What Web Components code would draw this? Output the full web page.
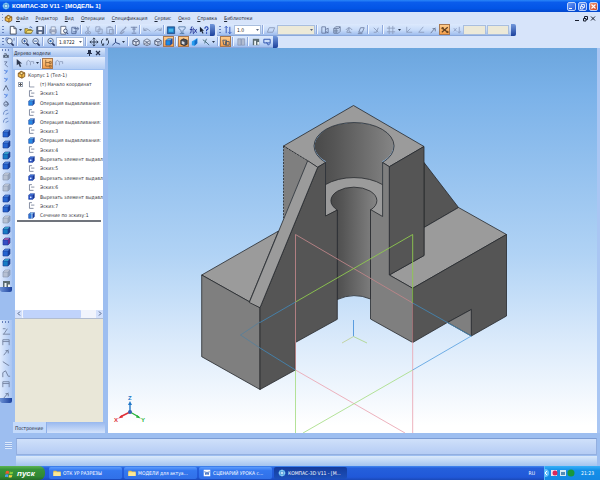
<!DOCTYPE html>
<html lang="ru">
<head>
<meta charset="utf-8">
<title>КОМПАС-3D V11 - [МОДЕЛЬ 1]</title>
<style>
html,body{margin:0;height:100%}
body{font:5px/8px "DejaVu Sans Condensed","DejaVu Sans",sans-serif;color:#1c2434;overflow:hidden}
</style>
</head>
<body>
<cad-app></cad-app>
<script>
const cube=(a,b,c,x='')=>`<path fill="${a}" d="M2 4 4 2h5L7 4z"/><path fill="${b}" d="M2 4h5v5H2z"/><path fill="${c}" d="M7 4l2-2v5L7 9z"/><path d="M2 4 4 2h5v5L7 9H2zM2 4h5l2-2M7 4v5" stroke="#173a94" stroke-width=".6" fill="none"/>${x}`;
const wire=(s,x='')=>`<path d="M2 4l3.500-2L9 4v4L5.500 9.500 2 8zM2 4l3.500 1.500L9 4M5.500 5.500v4" fill="#e4ecfa" stroke="${s}" stroke-width=".9"/>${x}`;
const lens=(x='')=>`<circle cx="5" cy="4.500" r="3" fill="#e8f2fc" stroke="#3c4c70" stroke-width=".9"/><path d="M7 7l2.500 2.500" stroke="#28345c" stroke-width="1.600"/>${x}`;
const st=(d,c='#42506e',w=1)=>`<path d="${d}" fill="none" stroke="${c}" stroke-width="${w}"/>`;
const G='#8b9aba';
const ICONS={
 app:`<circle cx="5.500" cy="5.500" r="4.500" fill="#5fb4ec"/><path d="M5.500 1v9M1 5.500h9" stroke="#d8f0ff"/><circle cx="5.500" cy="5.500" r="2.200" fill="#c4e6fc" stroke="#2c74c4" stroke-width=".7"/>`,
 part:`<path d="M1.500 4 5 1.500l4.500 2v4.500L6 10 1.500 8z" fill="#f2bd4c" stroke="#6c4210" stroke-width=".9"/><path d="M1.500 4 6 5.500 9.500 3.500M6 5.500V10" fill="none" stroke="#6c4210" stroke-width=".8"/><circle cx="5.500" cy="4" r="1.500" fill="#fff0b0" stroke="#6c4210" stroke-width=".6"/>`,
 new:`<path d="M2.500 1.500h4L9 4v6H2.500z" fill="#fff" stroke="#30384c" stroke-width=".9"/><path d="M6.500 1.500V4H9" fill="none" stroke="#30384c" stroke-width=".8"/>`,
 open:`<path d="M1 9V4h3l1 1h3v4z" fill="#e8c440" stroke="#5a5420" stroke-width=".7"/><path d="M2 9l1.500-3H10L8 9z" fill="#f8e078" stroke="#5a5420" stroke-width=".6"/><path d="M6 2.500q2-1.500 3 1" stroke="#2c50a0" stroke-width=".8" fill="none"/>`,
 save:`<path d="M2 2h7.500v7.500H2z" fill="#5c6c8c" stroke="#28344c" stroke-width=".8"/><path d="M3.500 2h4.500v3.500H3.500zM4 7.500h3.500v2H4z" fill="#f4f8ff"/>`,
 print:`<path d="M2 5h7v3.500H2z" fill="#a4aec4" stroke="#7482a0" stroke-width=".7"/><path d="M3.500 5V2H8v3M3.500 7.500H8V10H3.500z" fill="#e8eef8" stroke="#7482a0" stroke-width=".7"/>`,
 preview:`<path d="M2 1.500h5.500V10H2z" fill="#fff" stroke="#44506c" stroke-width=".8"/><circle cx="7" cy="6.500" r="2" fill="#dcecfc" stroke="#28365c" stroke-width=".8"/><path d="M8.500 8l1.500 2" stroke="#28365c"/>`,
 docs:st('M2 2.500h4.500v7H2zM4 4h5M8 2l1.500 2L8 6M3.500 7.500h4','#4c6290',.9),
 cut:st('M4 1.500 6.500 7M7 1.500 4.500 7',G,.8)+`<circle cx="4" cy="8.500" r="1.300" fill="none" stroke="${G}"/><circle cx="7" cy="8.500" r="1.300" fill="none" stroke="${G}"/>`,
 copy:st('M2 2h4.500v5H2zM4.500 4.500H9v5H4.500z',G,.9),
 paste:st('M2 2.500h6V9.500H2zM3.500 2h3M5 5h4.500v5H5z',G,.9),
 brush:st('M9 2 5.500 6M5.500 5 2.500 9l1.500.500L7 7',G,1.300),
 props:st('M2 2.500h7M3.500 4.500h4M5.500 2v6M3 9h5','#6f80a8',1),
 undo:st('M2 6q3-4 7 1M2 3v3h3',G,1),
 redo:st('M9 6q-3-4-7 1M9 3v3H6',G,1),
 vars:`<path d="M1.500 2h8v7.500h-8z" fill="#1e78c4" stroke="#174078" stroke-width=".8"/><path d="M3 4h5v3.500H3z" fill="#48b8e8"/>`,
 filt:st('M2 2h7v2L6.500 6v3.500L4.500 8V6L2 4z','#5478a4',.9)+st('M3 9.500h5','#5478a4'),
 fx:`<path d="M5 2Q3.500 1.500 3.500 3.500v3Q3.500 9.500 2 9M2 5h3M7 4.500l2.500 4M9.500 4.500 7 8.500M6 3q-1 3 0 7" fill="none" stroke="#14248c" stroke-width=".9"/>`,
 help:`<path d="M1 2v6l1.500-1.200L4 9.500l1-.5L3.700 6.300h1.800z" fill="#182030"/><path d="M6.500 4q0-2 1.700-2T10 3.800Q10 5 8.300 5.500V7M8.300 8v1.500" fill="none" stroke="#1c3cac" stroke-width="1.200"/>`,
 steps:st('M3.500 1.500V9M7.500 2v7.500M2 3l1.500-1.500L5 3M6 8l1.500 1.500L9 8','#2a50bc',1),
 plane:st('M1.500 8 3.500 3h6L7.500 8z',G,1),
 lcs:st('M2 2h4v7H2zM6 5l3-1.500v5H6M7 7l2 2','#64769c',.9),
 grid2:st('M2 4l2-2h5v5L7 9H2zM2 6.500h5M4.500 4v5M2 4h5l2-2','#5f6f90',.9),
 rot:st('M2 5.500q3.500-5 7 0M5.500 3v4L8 8.500 3 8z',G,1),
 sk:st('M3 8 5 3h4L7 8zM2 9.500h5','#7383a6',1),
 pt:st('M3 3l5 5M8 3 6 8H3',G,1),
 grid:st('M1 3.500h9M1 7.500h9M3.500 1v9M7.500 1v9',G,.9),
 ax:st('M3 2v6h6M3 8 7 4',G,.9),
 ang:st('M8 2 3 8h6',G,.9),
 snap:`<path d="M2 8 8.500 2.500M2 3l7 5.500" stroke="#5a3c20" stroke-width="1.200"/><circle cx="3" cy="3.500" r="1.300" fill="#724a22"/><circle cx="8" cy="7.500" r="1.300" fill="#724a22"/>`,
 xy:st('M2 3.500 5 7M5 3.500 2 7M8 2v6M6.500 7l1.500 2L9.500 7','#8a9cc0',.9),
 zin:lens(st('M3.500 4.500h3M5 3v3','#2850a0')),
 zout:lens(st('M3.500 4.500h3','#2850a0')),
 zwin:lens(st('M1 1h3M1 1v3M10 1v3','#3c64b0',.8)),
 zsel:lens(`<circle cx="5" cy="4.500" r="1.300" fill="#3470c0"/>`),
 move:st('M5.500 1v9M1 5.500h9M4 2.500 5.500 1 7 2.500M4 8.500l1.500 1.500L7 8.500M2.500 4 1 5.500 2.500 7M8.500 4 10 5.500 8.500 7','#28364c',1),
 spin:st('M3.500 2q-4 3.500 0 7M7.500 2q4 3.500 0 7M2 9h2V7M9 2H7v2','#28364c',1),
 axes:st('M5 1.500V6L1.500 9M5 6l5 2','#344c84',1.100),
 w1:wire('#3c4660'),w2:wire('#69748c',st('M2 8l3-2 4 2','#3c4660',.7)),w3:wire('#3c4660',`<path d="M6 6l3-2v4L6 9z" fill="#a8b4cc"/>`),
 shade:cube('#63c6f4','#1c8ce4','#1458b4'),shade2:`<path d="M2 3.500 5 2l4 1.500V8L6 9.500 2 8z" fill="#484c54" stroke="#20242c" stroke-width=".8"/><path d="M3 4.500 6 5.500v3L3 7.500z" fill="#d8dce4"/>`,
 persp:`<path d="M2 5 8 1.500V7L5 9.500 2 9z" fill="#279df0"/><path d="M5 5l3-3.500V7L5 9.500z" fill="#1669c4"/>`,
 sec:st('M2 3l4 3M5 5l4 4M6 2l-2 5','#456c7c',1),
 orng:st('M2 3.500h4v5H3zM5 5h4v4H5z','#4c5a6c',1),
 dim:`<path d="M2 2h3.500v7H2zM6 2h3.500v7H6z" fill="#b0bbd0" stroke="#8290b0" stroke-width=".7"/>`,
 spec:`<path d="M2 2h7v7H2z" fill="#5b6b70"/><path d="M3.500 4h2v5h-2zM7 5.500h2v3H7z" fill="#eef4f4"/>`,
 refr:st('M2 2.500h7v4H2zM5 6l2 3 2-2','#2850ac',1),
 sk3:st('M3 2v7h5M3 2h3M5 5h4','#5d6984',.9),
 org:st('M3 1.500v7h6','#5d6984',.8),
 ext:cube('#5ab4f4','#238ae6','#1450b0'),cutx:cube('#4278e0','#1c48c8','#143498',`<path d="M3.500 5.500h2v2h-2z" fill="#d8ecff"/>`),
 sect:cube('#58b0f0','#2a78dc','#173ca0',st('M6 2v8','#f0f8ff',.8)),
 ptr:`<path d="M3 1v7l2-1.500L6.500 10l1.500-.7L6.500 6H9z" fill="#303a50"/>`,
 tree:st('M3 2v7h4M3 5h4M7 4h2v2H7zM7 8h2v2H7z','#8a6030',.9),
 rel:st('M2 8V4l2-1.500L6 5v3M6 4h3.500v2.500',G,.9),
 sd1:cube('#43c4dc','#167cc4','#174490'),sd2:cube('#5690e8','#2564d0','#143c98'),
 sg:cube('#ccd3e0','#b6c0d2','#98a5bc').replace('#173a94','#8492ac'),spu:cube('#cc68b4','#384cc4','#802890'),
 dot:`<path d="M3 3l4 2-3 3" fill="none" stroke="#4a78d8" stroke-width="1.300"/><circle cx="7" cy="3.500" r="1.200" fill="#73a8f4"/>`,
 arc:st('M2 9q0-6 6-6M5 9l4-2','#5072b8',1),
 zee:st('M3 2.500h4L4 6l4 3.500','#56668c',1),
 tri:st('M2 9 5.500 2 9 9','#44536e',1.100),
 gear:`<circle cx="5.500" cy="5.500" r="3" fill="none" stroke="#4b5a78" stroke-width="1.100"/><path d="M5 1l4 5H4" fill="none" stroke="#4b5a78" stroke-width=".8"/>`,
 meas:`<path d="M1.500 4h8v4h-8z" fill="#65738c"/><path d="M3 2.500h3V4M4 5v2M7 5v2" stroke="#2e3a50" fill="none"/><circle cx="5.500" cy="6" r="1" fill="#dff"/>`,
 win:`<path d="M1 3Q3 1.500 5 3l-.5 3Q2.500 5 .5 6z" fill="#f05a30"/><path d="M5.800 3.200Q8 4.500 10 3l-.7 3Q7.500 7 5.300 6z" fill="#85cc3c"/><path d="M.300 7Q2.500 6 4.200 7l-.7 3Q2 9-.2 10z" fill="#4a9cf4"/><path d="M5 7.200q2 1 4 0L8.200 10q-2 1-3.900 0z" fill="#f8d440"/>`,
 fold:`<path d="M.500 2.500h4l1 1h5v6H.500z" fill="#eec850"/><path d="M.500 4.500h10v5H.500z" fill="#fbe898"/>`,
 word:`<path d="M1 1h9v9H1z" fill="#fff"/><path d="M2.500 3l1.500 5 1.500-4L7 8l1.500-5" fill="none" stroke="#245ab8" stroke-width="1.100"/>`,
 d1:st('M2 9h8M3 9l4-6M2 3h3','#6c7a98',.9),d2:st('M2 9V3h7v6M2 5h7','#6c7a98',.9),d3:st('M3 9l5-6M5 4h3v3','#6c7a98',1),d4:st('M2 4l6 4M8 8H9','#6c7a98',1),d5:st('M2 9V4l3-2 3 6h2','#6c7a98',1)
};
const svg=(n,s=11)=>`<svg viewBox="0 0 11 11" width="${s}" height="${s}" aria-hidden="true">${ICONS[n]||''}</svg>`;

/* Shared base: clones a template into an open shadow root. */
class Part extends HTMLElement{
 connectedCallback(){
  if(this.shadowRoot)return;
  const t=document.createElement('template');
  t.innerHTML=`<style>*{box-sizing:border-box}svg{display:block}button{font:inherit;color:inherit;padding:0;border:0;background:none}${this.css()}</style>${this.html()}`;
  this.attachShadow({mode:'open'}).append(t.content.cloneNode(true));
 }
 css(){return''} html(){return''}
}
const def=(n,css,html)=>customElements.define(n,class extends Part{css(){return css}html(){return typeof html==='function'?html(this):html}});

def('tool-icon',`:host{display:block;flex:none;width:11px;height:11px}
:host([size="8"]){width:10px;height:8px}
button{display:grid;place-items:center;width:100%;height:100%}
:host([on]) button{background:linear-gradient(#ffd092,#f49a44);outline:1px solid #a87850;outline-offset:-1px}`,
 e=>`<button aria-label="${e.getAttribute('label')||e.getAttribute('name')}">${svg(e.getAttribute('name'),+(e.getAttribute('draw')||10))}</button>`);

def('tool-sep',`:host{display:block;flex:none;width:2px;height:9px;border-left:1px solid #8fa9dc;border-right:1px solid #f0f6ff}`,'');
def('tool-more',`:host{display:block;flex:none;width:5px;height:9px}button{display:grid;place-items:center;width:100%;height:100%}`,
 `<button aria-label="Ещё"><svg width="3" height="2" viewBox="0 0 3 2"><path d="M0 0h3L1.500 2z" fill="#29374f"/></svg></button>`);
def('tool-group',`:host{display:flex;flex:none;align-items:center;height:12px;background:linear-gradient(#dce9fd,#c7dbf9 55%,#9fbdee);border-bottom:1px solid #8aa8dc;border-radius:0 2px 2px 0}
.grip{width:2px;height:8px;margin:0 var(--grip-gap,3px) 0 2px;background:repeating-linear-gradient(#6580bc 0 1px,transparent 1px 3px);flex:none}
.cap{width:5px;height:12px;margin-left:1px;border-radius:0 2px 2px 0;background:linear-gradient(#7298dc,#1c419c);flex:none}`,
 `<i class="grip"></i><slot></slot><i class="cap"></i>`);
def('tool-combo',`:host{display:block;flex:none;width:27px;height:10px;position:relative}
select{appearance:none;display:block;width:100%;height:100%;margin:0;border:1px solid #a9bede;background:#fff;font:inherit;line-height:8px;padding:0 2px;color:#222;border-radius:0;opacity:1}
select:disabled{background:#ece9d8}
svg{position:absolute;right:2px;top:4px}`,
 e=>`<select aria-label="${e.getAttribute('label')}" ${e.hasAttribute('off')?'disabled':''}><option>${e.getAttribute('value')||''}</option></select>${e.hasAttribute('plain')?'':'<svg width="3" height="2" viewBox="0 0 3 2"><path d="M0 0h3L1.500 2z" fill="#56647e"/></svg>'}`);

def('title-bar',`:host{display:flex;align-items:center;gap:2px;padding:0 2px 0 2px;background:linear-gradient(#2a86f8,#0a5cec 20%,#0355e6 70%,#0347cc);color:#fff;font:bold 6px/12px "Liberation Sans",sans-serif}
span{flex:1;white-space:nowrap}
button{width:9px;height:9px;border:1px solid #bcd2fa;border-radius:2px;background:linear-gradient(135deg,#6a9cf8,#2058dc);display:grid;place-items:center}
.x{background:linear-gradient(135deg,#f29a78,#d0401c)}`,
 ()=>`${svg('app',8)}<span>КОМПАС-3D V11 - [МОДЕЛЬ 1]</span>
<button aria-label="Свернуть"><svg width="7" height="7">${st('M1 5.500h3','#fff',1)}</svg></button>
<button aria-label="Восстановить"><svg width="7" height="7">${st('M2.500 3V1.500h3v3H4M1.500 3.500H4V6H1.500z','#fff',.8)}</svg></button>
<button class="x" aria-label="Закрыть"><svg width="7" height="7">${st('M1.500 1.500l4 4M5.500 1.500l-4 4','#fff',1.100)}</svg></button>`);

def('menu-bar',`:host{display:flex;align-items:center;background:#d7e4fa;padding:0 3px 0 2px}
.grip{width:1px;height:8px;margin-right:1px;background:repeating-linear-gradient(#7c94c8 0 1px,transparent 1px 3px)}
nav{display:flex;gap:7px;flex:1;margin-left:3px}
nav button{white-space:nowrap;line-height:10px}
nav button::first-letter{text-decoration:underline}
.mdi{display:flex;gap:1px}`,
 ()=>`<i class="grip"></i>${svg('part',9)}<nav>${['Файл','Редактор','Вид','Операции','Спецификация','Сервис','Окно','Справка','Библиотеки'].map(x=>`<button>${x}</button>`).join('')}</nav>
<div class="mdi">${[['Свернуть окно','M1 5.500h4'],['Восстановить окно','M2.500 3V1.500h3v3H4M1.500 3.500H4V6H1.500z'],['Закрыть окно','M1 1.500l4 4M5 1.500l-4 4']].map(([l,d])=>`<button aria-label="${l}"><svg width="7" height="7">${st(d,'#161c2c',1)}</svg></button>`).join('')}</div>`);

const ic=s=>s.split(' ').map(n=>n==='|'?'<tool-sep></tool-sep>':n==='v'?'<tool-more></tool-more>':`<tool-icon name="${n.replace('*','')}"${n.endsWith('*')?' on':''}></tool-icon>`).join('');
def('main-tools',`:host{display:flex;gap:2px;background:#d7e4fa}.snaps{--grip-gap:0px;gap:1px}`,
 ()=>`<tool-group>${ic('new v open save | print preview docs | cut copy paste | brush props | undo redo | vars filt fx help')}</tool-group>
<tool-group class="snaps">${ic('steps')}<tool-combo label="Шаг" value="1.0"></tool-combo>${ic('| plane')}<tool-combo off label="Слой" style="width:38px"></tool-combo>${ic('| lcs grid2 rot sk | pt | grid v ax ang d3 snap* xy')}<tool-combo off plain label="X" style="width:23px"></tool-combo><tool-combo off plain label="Y" style="width:22px"></tool-combo></tool-group>`);
def('view-tools',`:host{display:flex;background:#d7e4fa;--grip-gap:0px}tool-combo{width:28px}tool-sep{margin:0 1px}`,
 ()=>`<tool-group>${ic('zwin | zin zout | zsel')}<tool-combo label="Масштаб" value="1.8722"></tool-combo>${ic('| move spin axes v | w1 w2 w3 shade* | shade2* persp sec v | orng* | dim | spec refr')}</tool-group>`);

def('side-tools',`:host{display:flex;flex-direction:column;gap:28px;background:#9dbef0;padding-bottom:28px}
section{display:flex;flex-direction:column;align-items:center;width:12px;background:linear-gradient(90deg,#e0ebfd,#a9c5f2);border-radius:0 0 2px 2px}
.grip{width:8px;height:2px;margin:1px 0;background:repeating-linear-gradient(90deg,#6580bc 0 1px,transparent 1px 3px)}
.big{display:flex;flex-direction:column;margin-top:4px;justify-content:space-between;height:159px}
.cap{width:12px;height:5px;background:linear-gradient(90deg,#6a90d4,#1c419c);border-radius:0 0 2px 2px}
.dim{display:flex;flex-direction:column;height:74px;padding-top:2px;justify-content:space-between}`,
 ()=>`<section><i class="grip"></i>${['meas','zee','dot','dot','tri','dot','gear','arc','arc'].map(n=>`<tool-icon name="${n}" size="8" draw="8"></tool-icon>`).join('')}
<div class="big">${['sd2','sd2','sd1','sd2','sg','sg','sd2','sd2','sg','sd1','spu','sd2','sd1','sg','spec'].map(n=>`<tool-icon name="${n}" draw="11" size="8"></tool-icon>`).join('')}</div><i class="cap"></i></section>
<section><i class="grip"></i><div class="dim">${['d1','d2','d3','d4','d5','d2','d3'].map(n=>`<tool-icon name="${n}" draw="10" size="8"></tool-icon>`).join('')}</div><i class="cap"></i></section>`);

def('tree-row',`:host{display:flex;flex:1;align-items:center;padding-left:25px;white-space:nowrap;overflow:hidden;min-height:0;color:#303038}
:host([root]){padding-left:2px}
svg{flex:none;margin:0 4px 0 -13px}
:host([root]) svg{margin:0 2px 0 0}
button{width:5px;height:5px;border:1px solid #9aa4b4;margin-left:-22px;margin-right:17px;display:grid;place-items:center;flex:none}
button svg{margin:0}`,
 e=>`${e.hasAttribute('expand')?`<button aria-label="Развернуть"><svg width="3" height="3">${st('M0 1.500h3M1.500 0v3','#555',1)}</svg></button>`:''}${svg(e.getAttribute('icon'),9)}<slot></slot>`);

def('model-tree',`:host{display:flex;flex-direction:column;background:#9dbef0;padding:0 3px 0 1px;min-width:0}
header{display:flex;align-items:center;height:9px;padding:0 2px 0 1px;background:linear-gradient(#dbe8fc,#a4c1ee)}
header span{flex:1}header button{width:8px}
.bar{display:flex;align-items:center;height:12px;background:linear-gradient(#e2ecfd,#b4cdf4)}
.list{flex:12;background:#fff;margin:1px 2px 0;display:flex;flex-direction:column;overflow:hidden}
.rows{display:flex;flex-direction:column;height:150px;flex:none}
.end{height:2px;background:#70747c;margin:0 2px;flex:none}
.scroll{margin-top:auto;display:flex;height:8px;background:#f1f4fc}
.scroll b{width:58px;background:#c0d3fb;border-radius:1px;margin-right:auto;margin-left:1px}
.scroll button{width:7px;background:#d4e1fc;display:grid;place-items:center}
.props{flex:5;background:#e9e7d8;margin:0 2px;border-top:1px solid #b2bdd0}
footer{display:flex;height:11px;background:linear-gradient(#98b8ee,#d4e3fb)}
footer button{background:#c3dafb;padding:0 3px 0 2px;line-height:10px;border-right:1px solid #8fb0e8}`,
 ()=>`<header><span>Дерево модели</span><button aria-label="Закрепить"><svg width="5" height="6"><path d="M1 0h3v3H1zM0 3h5v1H0zM2 4h1v2H2z" fill="#24304c"/></svg></button><button aria-label="Закрыть панель"><svg width="6" height="6">${st('M1 1l4 4M5 1 1 5','#24304c',1.200)}</svg></button></header>
<div class="bar">${ic('ptr rel v | tree* rel')}</div>
<div class="list"><div class="rows">
<tree-row root icon="part">Корпус 1 (Тел-1)</tree-row><tree-row expand icon="org">(т) Начало координат</tree-row>
${[['sk3','Эскиз:1'],['ext','Операция выдавливания:'],['sk3','Эскиз:2'],['ext','Операция выдавливания:'],['sk3','Эскиз:3'],['ext','Операция выдавливания:'],['sk3','Эскиз:4'],['cutx','Вырезать элемент выдавл'],['sk3','Эскиз:5'],['cutx','Вырезать элемент выдавл'],['sk3','Эскиз:6'],['cutx','Вырезать элемент выдавл'],['sk3','Эскиз:7'],['sect','Сечение по эскизу:1']].map(([i,t])=>`<tree-row icon="${i}">${t}</tree-row>`).join('')}
</div><div class="end"></div><div class="scroll"><button aria-label="Влево"><svg width="4" height="5">${st('M3 .500 1 2.500l2 2','#4d6185',1)}</svg></button><b></b><button aria-label="Вправо"><svg width="4" height="5">${st('M1 .500l2 2-2 2','#4d6185',1)}</svg></button></div></div>
<div class="props"></div><footer><button>Построение</button></footer>`);

def('model-view',`:host{display:block;min-width:0;min-height:0;overflow:hidden;background:linear-gradient(#6ca6de,#7bb2e9 12%,#b1d3f5 54%,#dcebfb 77%,#fff 98%)}
svg{width:100%;height:100%}
.e{stroke:#26282c;stroke-width:.8;stroke-linejoin:round}.n{fill:none}
.t{fill:#9b9b9b}.f{fill:#7f7f7f}.d{fill:#555}
text{font:bold 6px "Liberation Sans",sans-serif}`,
`<svg viewBox="108 48 489 385" preserveAspectRatio="xMidYMid slice" role="img" aria-label="Модель корпуса">
<defs>
<linearGradient id="bore" x1="0" x2="1" y1="0" y2="0"><stop offset="0" stop-color="#494949"/><stop offset=".25" stop-color="#555"/><stop offset=".6" stop-color="#6b6b6b"/><stop offset="1" stop-color="#858585"/></linearGradient>
</defs>
<path class="d e" d="M424 162.500 458.500 207.500 424 227.500z"/>
<path class="t e" d="M424 227.500 458.500 207.500 506.500 234.500 412.700 288.300 389.300 275 424 255.500z"/>
<path class="d e" d="M412.700 288.300 506.500 234.500V316L471.300 336V309.500L446.500 323 412.700 342.500z"/>
<path class="f e" d="M471.300 309.500V336L447.500 322.500z"/>
<path d="M325.500 161V216H382.500V161C393 157 397 143 391 137 378 118 330 118 318 137 311 146 316 156 325.500 161z" fill="url(#bore)"/>
<path d="M325.500 184.600A40 23.500 0 0 1 382.500 184.600V216.500L370.500 209.500H337.300L325.500 216z" class="t"/>
<path class="e n" d="M325.500 184.600A40 23.500 0 0 1 382.500 184.600"/>
<path d="M337.300 210A23 13.500 0 1 1 370.500 210V299Q354 292 337.300 299.500z" fill="url(#bore)" class="e"/>
<path class="t e" d="M353.500 105.500 424 146.500 389.300 166.700 382.600 162.500A40 23.500 0 1 0 325.500 162.500L317.700 167.300 283.500 146z"/>
<path class="d e" d="M389.300 166.700 424 146.500V255.500L389.300 275z"/>
<path class="f e" d="M382.600 162.500 389.300 166.700V275L412.700 288.300V342.500L370.500 319V209.500L382.600 216.500z"/>
<path class="f" d="M283.500 146 307.700 160.700 283.500 219z"/>
<path class="e n" d="M283.500 146 307.700 160.700M283.500 146V218" stroke-dasharray="2 1.200"/>
<path class="t e" d="M201.700 275 278.500 231 249.300 302 260 307.700z"/>
<path class="f e" d="M201.700 275 260 307.700V389.500L201.700 356.700z"/>
<path class="d e" d="M317.700 167.300 325.500 162.500V216L337.300 210V319.300L295.300 342.500V370L260 389.500V307.700z"/>
<path class="t e" d="M307.700 160.700 317.700 167.300 260 307.700 249.300 302.500z"/>
<g fill="none" stroke-width=".9">
<path stroke="#bc8588" d="M295.500 234.500V370M295.500 234.500 412.700 303V342"/>
<path stroke="#eba9b5" d="M412.700 342V433M295.500 370 405 433"/>
<path stroke="#8fc94f" d="M295.500 302 412.700 234.500V303"/>
<path stroke="#acdf8c" d="M295.500 370V433M303 433 412.700 370"/>
<path stroke="#4383b0" d="M295.500 302 260 322.500M260 348 295.500 370M412.700 303 471.300 336"/>
<path stroke="#62a6e2" d="M412.700 370 471.300 336"/>
<path stroke="#597f99" d="M260 322 240.500 335 260 348"/>
<path stroke="#4c94dc" d="M353.500 320v16.500"/><path stroke="#aed68e" d="M353.500 336.500 367 343"/><path stroke="#c0d09a" d="M353.500 336.500 342 343"/>
</g>
<g fill="none" stroke-width="1.400"><path stroke="#2077c8" d="M130 412V403"/><path stroke="#e03038" d="M130 412 120 417"/><path stroke="#28b43c" d="M130 412 139 417"/></g>
<circle cx="130" cy="412" r="2" fill="#3560b4"/><path d="M128 405h4l-2-4z" fill="#2077c8"/><path d="M118 418.500l4-3.500 1 2.500z" fill="#e03038"/><path d="M141 418.500l-4-3.500-1 2.500z" fill="#28b43c"/>
<text x="128" y="400" fill="#2077c8">Z</text><text x="114" y="422" fill="#e03038">X</text><text x="141" y="422" fill="#28b43c">Y</text>
</svg>`);

def('status-panel',`:host{display:flex;background:#9dbef0;padding:5px 3px 0 5px;gap:4px;align-items:stretch}
.grip{width:7px;height:7px;margin-top:4px;background:repeating-linear-gradient(#dce9fc 0 1px,#8fafe4 1px 2px)}
.body{flex:1;display:flex;flex-direction:column;gap:1px}
.a{flex:8;border:1px solid #93afe0;border-top-color:#7c9cd4;background:linear-gradient(#cfe0fa,#b5ccf4)}
.b{flex:5;background:linear-gradient(#dae9fb,#a3c4ef)}`,
 `<i class="grip"></i><div class="body"><div class="a"></div><div class="b"></div></div>`);

def('task-button',`:host{display:block;width:73px;min-width:0}
button{display:flex;align-items:center;gap:2px;width:100%;height:12px;padding:0 4px;color:#fff;background:linear-gradient(#5c9cfc,#3478f0 30%,#3070e8);border-radius:2px;text-align:left;white-space:nowrap;overflow:hidden;line-height:12px}
:host([active]) button{background:linear-gradient(#143c9c,#1c50bc)}svg{flex:none}`,
 e=>`<button>${svg(e.getAttribute('icon'),8)}<slot></slot></button>`);
def('task-bar',`:host{display:flex;align-items:center;gap:2px;background:linear-gradient(#4288f0,#2560dc 15%,#2058d8 80%,#1a48b8);color:#fff}
.start{display:flex;align-items:center;gap:3px;width:45px;height:14px;padding-left:5px;margin-right:2px;background:linear-gradient(#5cb454,#36943a 25%,#318834 75%,#246c28);border-radius:0 6px 6px 0;font:italic bold 8px/13px "Liberation Sans",sans-serif}
.lang{margin-left:auto;margin-right:7px}
.tray{display:flex;align-items:center;gap:1px;height:14px;padding:0 6px 0 0;background:linear-gradient(#38b0f8,#1490e8 30%,#1488e4);border-left:1px solid #58bcf8}
time{margin-left:3px}`,
 ()=>`<button class="start">${svg('win',9)}пуск</button>
<task-button icon="fold">ОТК УР РАЗРЕЗЫ</task-button><task-button icon="fold">МОДЕЛИ для актуа...</task-button><task-button icon="word">СЦЕНАРИЙ УРОКА с...</task-button><task-button icon="app" active>КОМПАС-3D V11 - [М...</task-button>
<span class="lang">RU</span><div class="tray"><svg width="32" height="10"><circle cx="0" cy="5" r="4" fill="#6cc4fc"/><path d="M2 3 0 5l2 2" stroke="#fff" fill="none"/><path d="M6 2h6v6H6z" fill="#e8e0f0"/><circle cx="10" cy="5" r="2.500" fill="#d8285c"/><path d="M15 2h6v6h-6z" fill="#d8ecf4"/><path d="M16 4h4v3h-4z" fill="#548cb4"/><circle cx="26" cy="5" r="3.500" fill="#18983c"/></svg><time>21:23</time></div>`);

def('cad-app',`:host{display:grid;height:100vh;grid-template-rows:12px 12px 12px 12px minmax(0,1fr) 33px 14px}
main{display:grid;grid-template-columns:12px 96px minmax(0,1fr);padding-right:3px;background:#a9c6f3;min-height:0}`,
 `<title-bar></title-bar><menu-bar></menu-bar><main-tools></main-tools><view-tools></view-tools>
<main><side-tools></side-tools><model-tree></model-tree><model-view></model-view></main>
<status-panel></status-panel><task-bar></task-bar>`);
</script>
</body>
</html>
